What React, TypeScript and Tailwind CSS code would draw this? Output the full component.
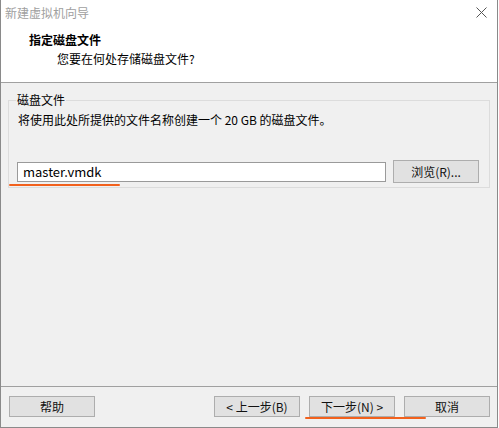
import React from "react";

const font = { fontFamily: '"Noto Sans CJK SC", "Noto Sans", sans-serif' };

function WinButton({ label, className = "" }: { label: string; className?: string }) {
  return (
    <button
      type="button"
      className={`flex h-[21px] w-[86px] items-center justify-center border border-[#adadad] bg-[#e1e1e1] text-[12px] leading-none text-[#111] ${className}`}
    >
      {label}
    </button>
  );
}

export default function App() {
  return (
    <div className="h-[428px] w-[499px] bg-white" style={font}>
      <div className="flex h-[428px] w-[498px] flex-col border border-t-0 border-[#8a8a8a]">
        {/* title bar + header */}
        <div className="h-[82px] bg-white">
          <div className="flex h-[26px] items-center justify-between pl-[4px] pr-[10px]">
            <span className="text-[12px] text-[#a0a0a0]">新建虚拟机向导</span>
            <svg width="11" height="11" viewBox="0 0 11 11" className="mt-[-1px]">
              <path d="M0.5 0.5L10.5 10.5M10.5 0.5L0.5 10.5" stroke="#555" strokeWidth="1" fill="none" />
            </svg>
          </div>
          <div className="pl-[28px] pt-[6px]">
            <div className="text-[12px] font-bold leading-[16px] text-black">指定磁盘文件</div>
            <div className="mt-[3px] pl-[28px] text-[12px] leading-[16px] text-black">您要在何处存储磁盘文件?</div>
          </div>
        </div>
        <div className="h-px bg-[#a0a0a0]" />

        {/* body */}
        <div className="flex flex-1 flex-col bg-[#f0f0f0]">
          <div className="px-[7px] pt-[9px]">
            <fieldset className="h-[96px] border border-[#dcdcdc] px-[9px]">
              <legend className="ml-[-2px] px-[1px] text-[12px] leading-[16px] text-black">磁盘文件</legend>
              <div className="mt-[4px] text-[12px] leading-[16px] text-black">
                将使用此处所提供的文件名称创建一个 20 GB 的磁盘文件。
              </div>
              <div className="mt-[32px] flex items-center">
                <div className="relative">
                  <div className="ml-[-1px] flex h-[20px] w-[369px] items-center border border-[#9a9a9a] bg-white pl-[5px] text-[13px] text-black">
                    master.vmdk
                  </div>
                  <div className="absolute left-[-9px] top-[22px] h-[2px] w-[111px] rounded-full bg-[#f2611d]" />
                </div>
                <button
                  type="button"
                  className="ml-[7px] flex h-[23px] w-[86px] items-center justify-center border border-[#adadad] bg-[#e1e1e1] text-[12px] text-[#111]"
                >
                  浏览(R)...
                </button>
              </div>
            </fieldset>
          </div>

          <div className="flex-1" />
          <div className="h-px bg-[#a0a0a0]" />
          <div className="flex h-[40px] items-start pl-[8px] pt-[9px]">
            <WinButton label="帮助" />
            <div className="ml-[119px] flex gap-[9px]">
              <WinButton label="< 上一步(B)" />
              <div className="relative">
                <WinButton label="下一步(N) >" />
                <div className="absolute left-[-4px] top-[21px] h-[2px] w-[121px] rounded-full bg-[#f2611d]" />
              </div>
              <WinButton label="取消" />
            </div>
          </div>
        </div>
      </div>
    </div>
  );
}
